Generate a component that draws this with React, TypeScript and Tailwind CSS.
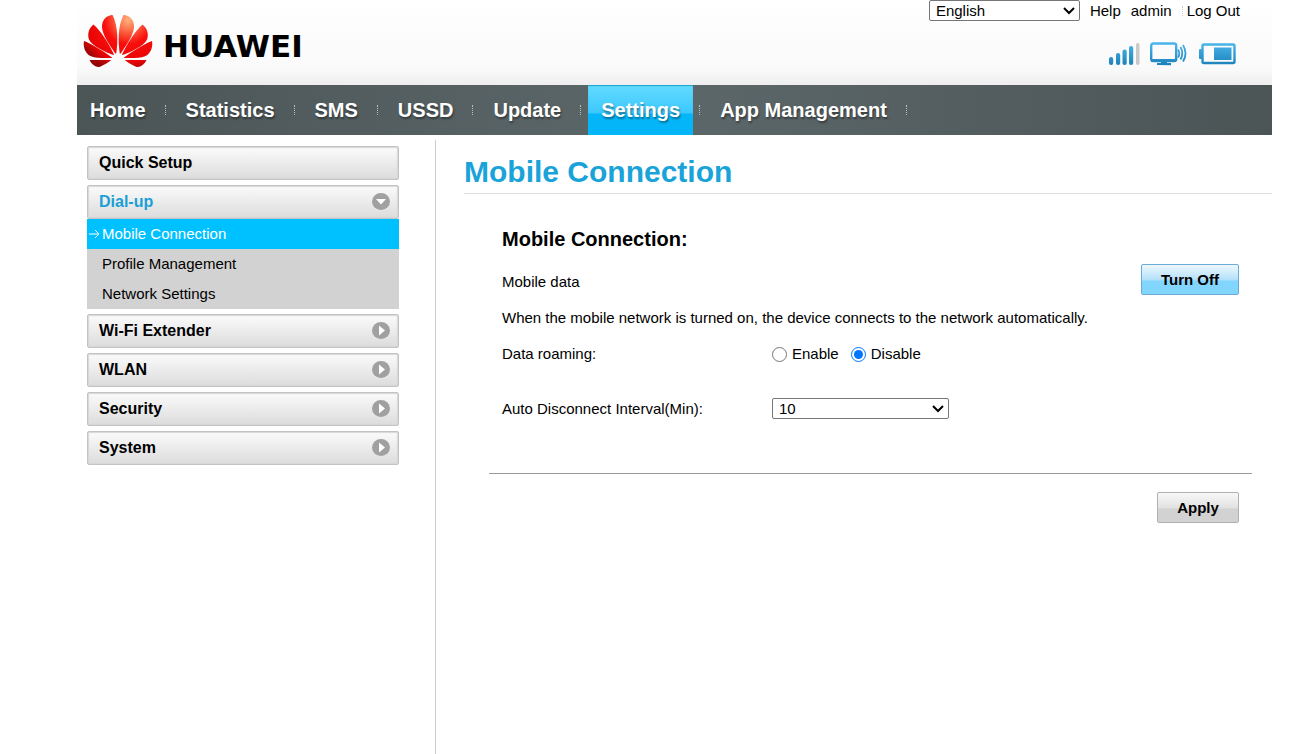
import React from "react";

const navItems = ["Home", "Statistics", "SMS", "USSD", "Update", "Settings", "App Management"];
const dialUpItems = ["Mobile Connection", "Profile Management", "Network Settings"];
const sections = ["Wi-Fi Extender", "WLAN", "Security", "System"];

function Petals() {
  return (
    <>
      <path d="M33.200 39.500C35 28 35.200 12 29.500 1C24 1.500 19.500 5 19 11.500C18.500 19 25 29 32.300 39.500Z" />
      <path d="M31 40.500C26 30 18 17 10.500 10.500C6 14 4 20 6 25.500C9 32 22 38 30.500 41Z" />
      <path d="M29 43.500C21 37.500 9 30 1 27C-.2 34 3 40 8 42.300C13 44.400 22 44 29 44Z" />
      <path d="M28 46L6.500 46C9 51 13 53.700 17 52.700C21 51.300 25 48.500 28 46.300Z" />
    </>
  );
}

function PetalStops() {
  return (
    <>
      <stop offset="0" stopColor="#ffb27c" />
      <stop offset="0.25" stopColor="#fb5a3c" />
      <stop offset="0.45" stopColor="#f90f0d" />
      <stop offset="0.8" stopColor="#e80505" />
      <stop offset="1" stopColor="#930505" />
    </>
  );
}

function Logo() {
  return (
    <svg width="70" height="54" viewBox="0 0 70 54" aria-hidden="true">
      <defs>
        <radialGradient id="petalLeft" gradientUnits="userSpaceOnUse" cx="45" cy="6" r="53">
          <PetalStops />
        </radialGradient>
        <radialGradient id="petalRight" gradientUnits="userSpaceOnUse" cx="25" cy="6" r="53">
          <PetalStops />
        </radialGradient>
      </defs>
      <g fill="url(#petalLeft)">
        <Petals />
      </g>
      <g fill="url(#petalRight)" transform="translate(70 0) scale(-1 1)">
        <Petals />
      </g>
    </svg>
  );
}

function StatusIcons() {
  return (
    <div className="flex items-center gap-[10px]">
      <svg width="31" height="24" viewBox="0 0 31 24" role="img" aria-label="Signal strength">
        <defs>
          <linearGradient id="blue" gradientUnits="userSpaceOnUse" x1="0" y1="0" x2="0" y2="24">
            <stop offset="0" stopColor="#4cb8ee" />
            <stop offset="1" stopColor="#1b7fb8" />
          </linearGradient>
        </defs>
        <g fill="url(#blue)">
          <rect x="0" y="15" width="4.200" height="8" rx="2" />
          <rect x="7" y="11" width="4.200" height="12" rx="2" />
          <rect x="13.500" y="7.500" width="4.200" height="15.500" rx="2" />
          <rect x="20" y="4" width="4.200" height="19" rx="2" />
        </g>
        <rect x="27" y="1" width="3.500" height="22" rx="1.700" fill="#c9c9c9" />
      </svg>
      <svg width="38" height="24" viewBox="0 0 38 24" role="img" aria-label="Wi-Fi status" fill="none" stroke="url(#blue)">
        <rect x="1.200" y="1.500" width="25" height="17.500" rx="2" strokeWidth="2.400" />
        <path d="M1 18.500C9 18.700 18 18.400 26 18.500" strokeWidth="3" />
        <path d="M7 22L21 22.200M11 20.500L17 20.600" strokeWidth="2.200" />
        <path d="M28 7.500Q30.500 11.500 28 15.500M30.500 5Q34 11.500 30.500 17.500M33 3Q38 11.500 33 19.500" strokeWidth="1.800" />
      </svg>
      <svg width="38" height="24" viewBox="0 0 38 24" role="img" aria-label="Battery level">
        <rect x="4.500" y="2.500" width="32" height="18.500" rx="1.500" fill="none" stroke="url(#blue)" strokeWidth="2.400" />
        <rect x="1" y="7" width="3.500" height="10" rx="1" fill="url(#blue)" />
        <rect x="16" y="5.500" width="17.500" height="12.500" fill="url(#blue)" />
      </svg>
    </div>
  );
}

function ArrowBadge({ open }: { open?: boolean }) {
  return (
    <svg width="18" height="17" viewBox="0 0 18 17" aria-hidden="true">
      <ellipse cx="9" cy="8.500" rx="9" ry="8.500" fill="#a0a0a0" />
      <path d={open ? "M4 6H14L9 11.500Z" : "M7 3.500L13 8.500L7 13.500Z"} fill="#fff" />
    </svg>
  );
}

function MenuButton({ label, state }: { label: string; state: "plain" | "open" | "closed" }) {
  return (
    <button
      type="button"
      className={`flex h-[34px] w-full items-center justify-between rounded-[2px] border border-[#c3c3c3] bg-linear-to-b from-[#fbfbfb] to-[#dcdcdc] pr-[8px] pb-[1px] pl-[11px] text-left text-[16px] leading-[20px] font-bold shadow-[inset_0_0_1px_1px_#d6d6d6] ${state === "open" ? "text-[#1a9fd6]" : "text-black"}`}
    >
      {label}
      {state !== "plain" && <ArrowBadge open={state === "open"} />}
    </button>
  );
}

function Select({ option, ...rest }: { option: string } & React.ComponentProps<"select">) {
  return (
    <span className="relative flex">
      <select {...rest}>
        <option>{option}</option>
      </select>
      <svg className="pointer-events-none absolute top-[7px] right-[5px]" width="12" height="8" viewBox="0 0 12 8" fill="none" stroke="#000" strokeWidth="2" aria-hidden="true">
        <path d="M1 1L6 6L11 1" />
      </svg>
    </span>
  );
}

export default function App() {
  return (
    <div className="flex min-h-screen flex-col bg-white pr-[31px] pl-[77px] font-['Liberation_Sans',Arial,sans-serif] text-[15px] leading-[20px] text-black">
      <header className="flex h-[85px] justify-between bg-linear-to-b from-white from-0% via-[#fafafa] via-80% to-[#eeeeee]">
        <a href="#home" className="flex items-start gap-[10px] pt-[14px] pl-[6px]" aria-label="HUAWEI">
          <Logo />
          <span className="pt-[12px] font-['DejaVu_Sans',sans-serif] text-[31px] leading-[40px] font-bold">HUAWEI</span>
        </a>
        <div className="flex flex-col items-end pr-[32px]">
          <div className="flex items-center">
            <Select option="English" aria-label="Language" className="h-[21px] w-[151px] appearance-none rounded-[2px] border border-[#767676] bg-white pl-[6px] text-[15px] leading-[19px]" />
            <a href="#help" className="ml-[10px]">Help</a>
            <a href="#admin" className="ml-[10px]">admin</a>
            <span className="mr-[4px] ml-[10px] h-[10px] border-l border-dotted border-[#cccccc]" />
            <a href="#logout">Log Out</a>
          </div>
          <div className="mt-[21px] pr-[4px]">
            <StatusIcons />
          </div>
        </div>
      </header>

      <nav className="flex h-[50px] items-center bg-linear-to-r from-[#4b5556] via-[#5c676a] to-[#4b5556] text-[20px] font-bold text-white">
        {navItems.map((item) => (
          <React.Fragment key={item}>
            <a
              href={`#${item}`}
              className={`flex h-full items-center px-[13px] text-shadow-[1px_2px_2px_rgb(0_0_0/0.4)] ${item === "Settings" ? "bg-linear-to-b from-[#62dbff] from-0% via-[#3bc8fd] via-55% to-[#04b6f8] to-58% shadow-[inset_0_1px_1px_#1b9fd0]" : ""}`}
            >
              {item}
            </a>
            <span className="mr-[7px] ml-[6px] h-[10px] border-l border-dotted border-[#b9c0c1]" />
          </React.Fragment>
        ))}
      </nav>

      <div className="flex flex-1 pt-[5px]">
        <aside className="w-[359px] shrink-0 border-r border-[#cccccc] pt-[6px] pr-[36px] pl-[10px]">
          <div className="flex flex-col gap-[5px]">
            <MenuButton label="Quick Setup" state="plain" />
            <div>
              <MenuButton label="Dial-up" state="open" />
              <ul className="bg-[#d2d2d2]">
                {dialUpItems.map((item, i) => (
                  <li key={item}>
                    <a href={`#${item}`} className={`flex h-[30px] items-center ${i === 0 ? "bg-[#00c1ff] text-white" : ""}`}>
                      <span className="flex w-[15px] pl-[2px]">
                        {i === 0 && (
                          <svg width="11" height="10" viewBox="0 0 11 10" fill="none" stroke="#fff" aria-hidden="true">
                            <path d="M0 5H10M6 1L10 5L6 9" />
                          </svg>
                        )}
                      </span>
                      {item}
                    </a>
                  </li>
                ))}
              </ul>
            </div>
            {sections.map((label) => (
              <MenuButton key={label} label={label} state="closed" />
            ))}
          </div>
        </aside>

        <main className="flex-1 pl-[28px]">
          <h1 className="border-b border-[#dcdcdc] pt-[14px] pb-[3px] text-[30px] leading-[36px] font-bold text-[#1aa3d9]">Mobile Connection</h1>
          <form className="mr-[20px] ml-[25px]" onSubmit={(e) => e.preventDefault()}>
            <div className="border-b border-[#999999] pt-[33px] pr-[13px] pb-[54px] pl-[13px]">
              <h2 className="text-[20px] leading-[24px] font-bold">Mobile Connection:</h2>
              <div className="mt-[13px] flex items-center justify-between">
                <span className="pt-[4px]">Mobile data</span>
                <button type="button" className="h-[31px] w-[98px] rounded-[2px] border border-[#6caad8] bg-linear-to-b from-[#eef8fe] from-0% via-[#b4e1fa] via-50% to-[#82d5fc] to-56% text-[15px] font-bold">
                  Turn Off
                </button>
              </div>
              <p className="mt-[13px]">When the mobile network is turned on, the device connects to the network automatically.</p>
              <div className="mt-[16px] flex items-center" role="radiogroup" aria-labelledby="roaming">
                <span id="roaming" className="w-[270px]">Data roaming:</span>
                <label className="flex items-center gap-[5px]">
                  <input type="radio" name="roaming" className="h-[15px] w-[15px]" />
                  Enable
                </label>
                <label className="ml-[12px] flex items-center gap-[5px]">
                  <input type="radio" name="roaming" defaultChecked className="h-[15px] w-[15px]" />
                  Disable
                </label>
              </div>
              <div className="mt-[34px] flex items-center">
                <label htmlFor="interval" className="w-[270px]">Auto Disconnect Interval(Min):</label>
                <Select option="10" id="interval" className="h-[21px] w-[177px] appearance-none rounded-[2px] border border-[#767676] bg-white pl-[6px] text-[15px] leading-[19px]" />
              </div>
            </div>
            <div className="flex justify-end pt-[18px] pr-[13px]">
              <button type="submit" className="h-[31px] w-[82px] rounded-[2px] border border-[#b0b0b0] bg-linear-to-b from-[#f8f8f8] from-0% via-[#e2e2e2] via-50% to-[#d2d2d2] to-56% text-[15px] font-bold">
                Apply
              </button>
            </div>
          </form>
        </main>
      </div>
    </div>
  );
}
